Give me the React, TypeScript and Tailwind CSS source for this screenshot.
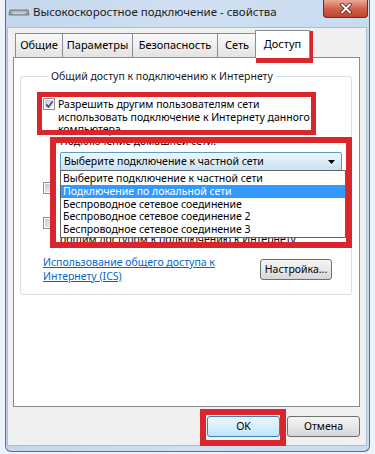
import React from "react";

function CheckBox({ checked }: { checked?: boolean }) {
  return (
    <span className="relative w-[12px] h-[12px] shrink-0 border border-[#8e8f8f] bg-white p-[1px] flex">
      <span className="flex-1 bg-gradient-to-br from-[#c5c9cf] to-[#f4f4f4]" />
      {checked && (
        <svg className="absolute left-[1px] top-[1px]" width="9" height="9" viewBox="0 0 9 9">
          <path d="M1.2 4.4 L3.5 7 L7.8 1.3" fill="none" stroke="#3c4f8c" strokeWidth="1.7" />
        </svg>
      )}
    </span>
  );
}

function RedBox({ cls }: { cls: string }) {
  return <div className={"absolute border-[#d9252c] pointer-events-none " + cls} />;
}

export default function App() {
  return (
    <div
      className="relative w-[375px] h-[454px] overflow-hidden bg-[#eef3f9] text-[10.5px] text-black"
      style={{ fontFamily: '"Noto Sans", sans-serif' }}
    >
      <div className="mx-[5px] h-[452px] flex flex-col border-x border-b border-[#56708f] rounded-b-[6px] bg-gradient-to-r from-[#c3d6ec] via-[#d0e0f2] to-[#c9dbef]">
        {/* title bar */}
        <div className="h-[27px] flex items-start shrink-0">
          <div className="flex items-center h-[24px] pl-[2px] gap-[3px]">
            <svg width="22" height="10" viewBox="0 0 22 10">
              <path d="M2 3 L20 3 L21 8 L1 8 Z" fill="#9aa3ad" stroke="#5f6670" strokeWidth="0.8" />
              <path d="M4 5 H18 M5 6.6 H17" stroke="#e6e9ed" strokeWidth="0.8" />
            </svg>
            <span className="text-[11.5px] text-[#1b1b1b] leading-none">Высокоскоростное подключение - свойства</span>
          </div>
          <div className="ml-auto mr-[1px] w-[45px] h-[18px] rounded-b-[4px] border border-t-0 border-[#6b2a22] bg-gradient-to-b from-[#e8aa98] via-[#d2634c] to-[#c0432d] flex items-center justify-center">
            <svg width="14" height="11" viewBox="0 0 14 11">
              <path d="M3 1.5 L11 9.5 M11 1.5 L3 9.5" stroke="#5a1c14" strokeWidth="3.6" strokeLinecap="round" />
              <path d="M3 1.5 L11 9.5 M11 1.5 L3 9.5" stroke="#ffffff" strokeWidth="2" strokeLinecap="round" />
            </svg>
          </div>
        </div>

        {/* client */}
        <div className="flex-1 ml-[1px] mr-[2px] mb-[5px] bg-[#f0f0f0] border border-[#a9bdd4] flex flex-col pt-[2px]">
          {/* tabs */}
          <div className="h-[27px] flex items-end pl-[7px] shrink-0">
            {["Общие", "Параметры", "Безопасность", "Сеть"].map((t, i) => (
              <div
                key={t}
                className={
                  "h-[24px] border border-b-0 border-[#898c95] bg-gradient-to-b from-[#fafafa] to-[#e3e3e3] flex items-center justify-center text-[11px] pb-[1px] " +
                  (i === 0 ? "w-[48px]" : i === 1 ? "w-[71px] -ml-[1px]" : i === 2 ? "w-[86px] -ml-[1px]" : "w-[40px] -ml-[1px]")
                }
              >
                {t}
              </div>
            ))}
            <div className="relative z-10 -ml-[2px] -mb-[1px] w-[55px] h-[28px] border border-b-0 border-[#898c95] bg-white flex items-start justify-center pt-[5px] text-[11px]">
              Доступ
            </div>
          </div>

          {/* panel */}
          <div className="flex-1 ml-[5px] mr-[6px] bg-white border border-[#898c95] flex flex-col">
            <fieldset className="mt-[10px] ml-[6px] mr-[7px] border border-[#d5dfe5] rounded-[3px] pl-[22px] pr-[6px] pb-[11px]">
              <legend className="ml-[5px] px-[3px] leading-[16px] text-[#1a1a1a]">
                Общий доступ к подключению к Интернету
              </legend>
              <div className="mt-[14px] flex items-start gap-[3px] leading-[12.5px]">
                <span><CheckBox checked /></span>
                <div>
                  <div>Разрешить другим пользователям сети</div>
                  <div>использовать подключение к Интернету данного</div>
                  <div>компьютера</div>
                </div>
              </div>
              <div className="ml-[17px] mt-[-1px] leading-[12.5px]">Подключение домашней сети:</div>
              <div className="relative ml-[17px] mr-[3px] mt-[5px] h-[19px] rounded-[2px] border border-[#5b9bc9] bg-gradient-to-b from-[#eef7fd] via-[#dcedf8] to-[#c4e2f5] flex items-center pl-[3px] pr-[6px]">
                <span className="leading-none">Выберите подключение к частной сети</span>
                <svg className="ml-auto" width="7" height="4" viewBox="0 0 7 4">
                  <path d="M0 0 H7 L3.5 4 Z" fill="#000" />
                </svg>
                <div className="absolute left-[-1px] top-[17px] w-[286px] z-20 bg-white border border-[#646464] pt-[1px] pb-[1px] leading-[12.8px]">
                  <div className="px-[2px]">Выберите подключение к частной сети</div>
                  <div className="px-[2px] bg-[#3399ff] text-white">Подключение по локальной сети</div>
                  <div className="px-[2px]">Беспроводное сетевое соединение</div>
                  <div className="px-[2px]">Беспроводное сетевое соединение 2</div>
                  <div className="px-[2px]">Беспроводное сетевое соединение 3</div>
                </div>
              </div>
              <div className="mt-[11px] flex items-start gap-[5px] leading-[12.5px]">
                <CheckBox />
                <div className="invisible">
                  <div>Устанавливать телефонное подключение при попытке</div>
                  <div>доступа к Интернету с компьютера домашней сети</div>
                </div>
              </div>
              <div className="mt-[10px] flex items-start gap-[5px] leading-[12.5px]">
                <CheckBox />
                <div>
                  <div className="invisible">Разрешить другим пользователям сети управление</div>
                  <div className="relative top-[3px]">общим доступом к подключению к Интернету</div>
                </div>
              </div>
              <div className="mt-[14px] flex items-center">
                <div className="leading-[13.5px] text-[#0066cc] underline">
                  <div>Использование общего доступа к</div>
                  <div>Интернету (ICS)</div>
                </div>
                <button className="ml-auto mr-[13px] w-[72px] h-[21px] rounded-[3px] border border-[#707070] bg-gradient-to-b from-[#f4f4f4] via-[#e8e8e8] to-[#d6d6d6] leading-none">
                  Настройка...
                </button>
              </div>
            </fieldset>
          </div>

          {/* bottom buttons */}
          <div className="h-[38px] shrink-0 flex items-start justify-end gap-[7px] pt-[9px] pr-[6px]">
            <button className="w-[73px] h-[21px] rounded-[3px] border border-[#3c7fb1] bg-gradient-to-b from-[#eaf6fd] via-[#d9effc] to-[#bce4fa] leading-none">
              OK
            </button>
            <button className="w-[73px] h-[21px] rounded-[3px] border border-[#707070] bg-gradient-to-b from-[#f4f4f4] via-[#e8e8e8] to-[#d6d6d6] leading-none">
              Отмена
            </button>
          </div>
        </div>
      </div>

      {/* red annotation frames */}
      <RedBox cls="left-[256px] top-[31px] w-[57px] h-[32px] border-[5px]" />
      <RedBox cls="left-[37px] top-[92px] w-[279px] h-[43px] border-[5px]" />
      <RedBox cls="left-[50px] top-[137px] w-[302px] h-[111px] border-[6px]" />
      <RedBox cls="left-[200px] top-[409px] w-[86px] h-[37px] border-[6px]" />
    </div>
  );
}
